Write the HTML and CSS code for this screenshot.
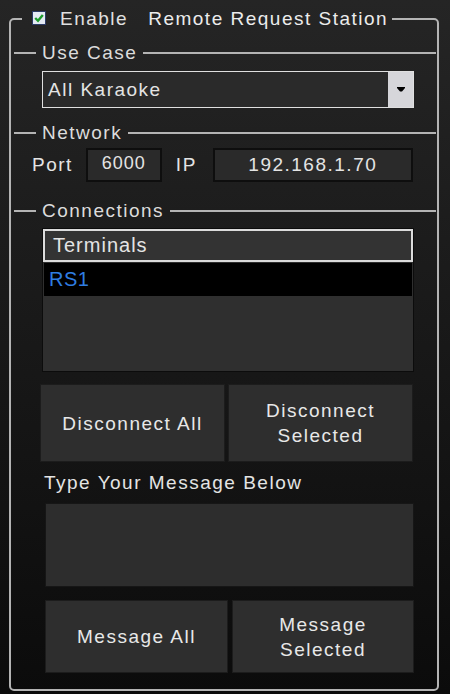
FILE: index.html
```html
<!DOCTYPE html>
<html>
<head>
<meta charset="utf-8">
<link rel="stylesheet" href="styles.css">
</head>
<body>
<fieldset class="frame">
  <legend class="frame-legend">
    <span class="legend-row">
      <span class="check">
        <svg width="14" height="14" viewBox="0 0 14 14">
          <rect x="0.5" y="0.5" width="13" height="13" fill="#e4eaf4" stroke="#2b3a66"/>
          <path d="M3.2 7 L6 9.8 L10.8 4" fill="none" stroke="#1c9c2c" stroke-width="2.4"/>
        </svg>
      </span>
      <span class="enable">Enable</span>
      <span class="title">Remote Request Station</span>
    </span>
  </legend>

  <div class="group-head"><span>Use Case</span></div>
  <div class="select">
    <div class="select-value">All Karaoke</div>
    <div class="select-btn">
      <svg width="8" height="5" viewBox="0 0 8 5"><path d="M0 0H8V1L5 4.5H3L0 1Z" fill="#000"/></svg>
    </div>
  </div>

  <div class="group-head"><span>Network</span></div>
  <div class="net">
    <span class="port-label">Port</span>
    <div class="field port">6000</div>
    <span class="ip-label">IP</span>
    <div class="field ip">192.168.1.70</div>
  </div>

  <div class="group-head"><span>Connections</span></div>
  <div class="list">
    <div class="list-head">Terminals</div>
    <div class="list-row">RS1</div>
  </div>

  <div class="btn-row">
    <div class="btn">Disconnect All</div>
    <div class="btn">Disconnect<br>Selected</div>
  </div>

  <div class="msg-label">Type Your Message Below</div>
  <div class="msg-box"></div>

  <div class="btn-row btn-row2">
    <div class="btn">Message All</div>
    <div class="btn">Message<br>Selected</div>
  </div>
</fieldset>
</body>
</html>
```

FILE: styles.css
```css
* { box-sizing: border-box; }
html, body { margin: 0; height: 694px; }
body {
  background: linear-gradient(#252525, #0b0b0b);
  font-family: "Liberation Sans", Arial, sans-serif;
  font-size: 19px;
  letter-spacing: 1.5px;
  color: #e4e4e4;
  overflow: hidden;
  padding-top: 6px;
}
.frame {
  margin: 0 11px 0 9px;
  border: 2px solid #b4b4b4;
  border-radius: 5px;
  padding: 0 1px 16px 3px;
  min-width: 0;
}
.frame-legend {
  margin-left: 8px;
  padding: 0 4px 0 10px;
}
.legend-row {
  display: flex;
  align-items: center;
  height: 26px;
}
.check {
  width: 14px;
  height: 14px;
  margin-right: 14px;
  margin-top: -3px;
  display: flex;
}
.enable { margin-right: 20px; color: #e0e0e0; }
.title { color: #ececec; }

.group-head {
  display: flex;
  align-items: center;
  height: 22px;
  color: #dcdcdc;
}
.group-head::before {
  content: "";
  width: 22px;
  border-top: 2px solid #b4b4b4;
}
.group-head::after {
  content: "";
  flex: 1;
  border-top: 2px solid #b4b4b4;
}
.group-head span { margin: 0 6px; }
.frame-legend + .group-head { margin-top: 10px; }

.select {
  margin: 7px 22px 0 28px;
  height: 37px;
  border: 1px solid #e0e0e0;
  background: #2a2a2a;
  display: flex;
}
.select-value {
  flex: 1;
  padding-left: 5px;
  line-height: 35px;
}
.select-btn {
  width: 25px;
  background: #d6d6da;
  display: flex;
  align-items: center;
  justify-content: center;
}
.select + .group-head { margin-top: 14px; }

.net {
  display: flex;
  align-items: center;
  margin-top: 4px;
  height: 34px;
  padding-left: 18px;
}
.port-label { margin-right: 13px; }
.field {
  height: 34px;
  background: #2a2a2a;
  border: 2px solid #0e0e0e;
  display: flex;
  justify-content: center;
}
.port {
  width: 76px;
  font-size: 18px;
  letter-spacing: 1px;
  line-height: 26px;
}
.ip-label { margin: 0 16px 0 14px; }
.ip {
  width: 200px;
  line-height: 30px;
}
.net + .group-head { margin-top: 18px; }

.list {
  margin: 6px 22px 0 28px;
  height: 144px;
  border: 1px solid #0c0c0c;
  background: #2f2f2f;
}
.list-head {
  height: 33px;
  border: 2px solid #dcdcdc;
  background: #333;
  font-size: 20px;
  letter-spacing: 1px;
  padding-left: 8px;
  line-height: 29px;
}
.list-row {
  height: 33px;
  margin: 1px 1px 0;
  background: #000;
  color: #2f7de1;
  font-size: 20px;
  letter-spacing: 0.5px;
  padding-left: 5px;
  line-height: 33px;
}

.btn-row {
  display: flex;
  gap: 3px;
  margin: 12px 0 0 26px;
  height: 78px;
}
.btn {
  width: 185px;
  background: #2e2e2e;
  border: 1px solid #1c1c1c;
  display: flex;
  align-items: center;
  justify-content: center;
  text-align: center;
  line-height: 25px;
  color: #e8e8e8;
}
.msg-label {
  margin-top: 9px;
  height: 24px;
  line-height: 24px;
  padding-left: 30px;
}
.msg-box {
  margin: 8px 22px 0 31px;
  height: 84px;
  background: #2d2d2d;
  border: 1px solid #161616;
}
.btn-row2 {
  margin: 13px 0 0 31px;
  gap: 4px;
  height: 73px;
}
.btn-row2 .btn { width: 183px; }
.btn-row2 .btn + .btn { width: 182px; }
```
